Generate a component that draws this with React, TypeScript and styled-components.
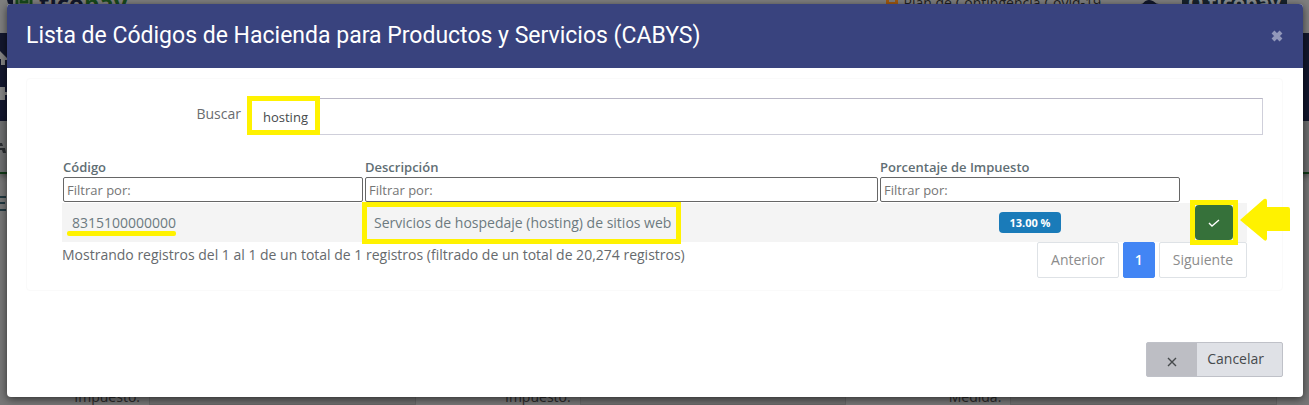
import React from 'react';
import styled, { createGlobalStyle, css } from 'styled-components';

const GlobalStyle = createGlobalStyle`
  *, *::before, *::after { box-sizing: border-box; }
  body {
    margin: 0;
    overflow: hidden;
    background: #787878;
    color: #5b5e60;
    font: 400 14px/20px "Open Sans", "Noto Sans", sans-serif;
  }
  button, input { font: inherit; }
`;

const Page = styled.div`
  position: relative;
  min-height: 100vh;
  display: grid;
`;

/* Dimmed application behind the dialog */
const Backdrop = styled.div`
  grid-area: 1 / 1;
  display: flex;
  flex-direction: column;
  background: #777777;
`;

const TopBar = styled.div`
  display: flex;
  height: 33px;
  padding: 0 22px 0 3px;
  background: #7f7f7f;
  line-height: 6px;
`;

const Brand = styled.div<{ $end?: boolean }>`
  display: flex;
  gap: 4px;
  align-items: flex-start;
  height: 8px;
  padding: 0 4px;
  color: #12172b;
  font-size: 24px;
  font-weight: 700;
  ${(p) => p.$end && css`
    justify-content: center;
    width: 105px;
    margin-left: 16px;
    background: #17222c;
    color: #8a8f92;
    font-size: 20px;
  `}
  em { font-style: normal; color: #174a1c; }
`;

const Notice = styled.div`
  display: flex;
  gap: 5px;
  margin-left: auto;
  color: #222222;
`;

const Square = styled.svg`
  display: block;
  height: 6px;
`;

const NavBar = styled.div`
  display: flex;
  flex-direction: column;
  gap: 20px;
  height: 88px;
  padding-top: 17px;
  background: #13172e;
`;

const SubBar = styled.div`
  height: 53px;
  padding-top: 18px;
  background: #6e6f70;
  border-bottom: 2px solid #123a18;
  box-shadow: 0 2px 6px rgba(0, 0, 0, 0.4);
`;

const FormArea = styled.div`
  flex: 1;
  display: flex;
  flex-direction: column;
  justify-content: space-between;
  padding: 20px 0 0;
`;

const FormRow = styled.div`
  display: grid;
  grid-template-columns: repeat(3, 1fr);
  column-gap: 77px;
  padding: 0 32px 0 62px;
  height: 16px;
  color: #2a2a2a;
  line-height: 16px;
`;

const FormCell = styled.div`
  display: grid;
  grid-template-columns: 78px 1fr;
  column-gap: 9px;
  span { text-align: right; }
`;

const FakeField = styled.div`
  background: #6f6f6f;
  border: 1px solid #666666;
`;

/* Dialog */
const Dialog = styled.section`
  grid-area: 1 / 1;
  z-index: 1;
  align-self: start;
  margin: 4px 6px 8px 7px;
  background: #ffffff;
  border-radius: 4px;
  box-shadow: 0 2px 9px rgba(0, 0, 0, 0.6);
`;

const DialogHeader = styled.header`
  display: flex;
  align-items: center;
  justify-content: space-between;
  height: 64px;
  padding: 0 20px 0 19px;
  background: #39437e;
  border-radius: 4px 4px 0 0;
`;

const Title = styled.h1`
  margin: 0;
  color: #ffffff;
  font-family: Roboto, "Open Sans", sans-serif;
  font-size: 23px;
  font-weight: 400;
  line-height: 32px;
`;

const CloseButton = styled.button`
  display: flex;
  padding: 0;
  border: 0;
  background: none;
  color: #9298ba;
`;

const DialogBody = styled.div`
  padding: 10px 20px 0 19px;
`;

const Panel = styled.div`
  padding: 19px 0 12px;
  border: 1px solid #fafafa;
  border-radius: 4px;
`;

const SearchRow = styled.div`
  display: grid;
  grid-template-columns: 195px 1fr;
  column-gap: 8px;
  padding: 0 19px;
  margin-bottom: 21px;
`;

const SearchLabel = styled.label`
  padding-top: 6px;
  color: #6a6c6f;
  text-align: right;
`;

const Marked = styled.div`
  position: relative;
`;

const SearchInput = styled.input`
  display: block;
  width: 100%;
  height: 37px;
  padding: 0 13px;
  border: 1px solid #cfcfda;
  border-top-color: #b9b7c6;
  border-radius: 0;
  background: #ffffff;
  color: #464a4c;
  font-size: 13px;
`;

const Highlight = styled.span<{ $kind: 'search' | 'text' | 'button' }>`
  position: absolute;
  border: 5px solid #fff200;
  pointer-events: none;
  ${(p) => p.$kind === 'search' && css`top: -2px; left: -2px; width: 73px; height: 39px;`}
  ${(p) => p.$kind === 'text' && css`inset: -11px -10px -11px -12px;`}
  ${(p) => p.$kind === 'button' && css`inset: -5px;`}
`;

const Results = styled.div`
  padding: 0 35px;
`;

const Table = styled.table`
  width: 100%;
  table-layout: fixed;
  border-collapse: collapse;
`;

const Col = styled.col<{ $w?: number }>`
  width: ${(p) => (p.$w ? `${p.$w}px` : 'auto')};
`;

const HeadCell = styled.th`
  padding: 1px;
  color: #5f6e74;
  font-size: 13px;
  font-weight: 600;
  line-height: 20px;
  text-align: left;
`;

const FilterInput = styled.input`
  display: block;
  width: 100%;
  height: 25px;
  padding: 0 3px;
  border: 1px solid #666666;
  border-radius: 2px;
  background: #ffffff;
  font-size: 13px;
  font-weight: 400;
  &::placeholder { color: #757575; opacity: 1; }
`;

const Row = styled.tr`
  height: 39px;
  background: #f4f4f4;
`;

const Cell = styled.td<{ $center?: boolean }>`
  padding: 0 ${(p) => (p.$center ? 0 : 10)}px;
  color: #6c7a80;
  text-align: ${(p) => (p.$center ? 'center' : 'left')};
  vertical-align: middle;
`;

const MarkedText = styled.span`
  position: relative;
  display: inline-block;
`;

const Underline = styled.span`
  position: absolute;
  left: -5px;
  right: 0;
  bottom: -3px;
  height: 5px;
  border-radius: 2px;
  background: #fff200;
`;

const Badge = styled.span`
  display: inline-block;
  padding: 0 10px;
  border-radius: 4px;
  background: #1a7bb9;
  color: #ffffff;
  font-size: 11px;
  font-weight: 700;
  line-height: 21px;
  vertical-align: middle;
`;

const SelectWrap = styled.div`
  position: relative;
  width: 38px;
  margin: 0 auto;
`;

const SelectButton = styled.button`
  display: flex;
  align-items: center;
  justify-content: center;
  width: 100%;
  height: 35px;
  padding: 0;
  border: 0;
  border-radius: 4px;
  background: #36713a;
  color: #ffffff;
`;

const Arrow = styled.svg`
  position: absolute;
  top: -7px;
  left: 45px;
`;

const TableFooter = styled.div`
  display: flex;
  justify-content: space-between;
  align-items: flex-start;
`;

const Info = styled.p`
  margin: 0;
  padding-top: 3px;
  color: #666a6d;
`;

const Pager = styled.nav`
  display: flex;
  gap: 4px;
`;

const PageButton = styled.button<{ $active?: boolean }>`
  height: 36px;
  padding: 0 13px;
  border: 1px solid #dee2e6;
  border-radius: 2px;
  background: #ffffff;
  color: #8c8c8c;
  ${(p) => p.$active && css`
    padding: 0 11px;
    border-color: #4285f4;
    background: #4285f4;
    color: #ffffff;
    font-weight: 600;
  `}
`;

const DialogFooter = styled.footer`
  display: flex;
  justify-content: flex-end;
  padding: 51px 20px 20px;
`;

const CancelButton = styled.button`
  display: flex;
  align-items: stretch;
  height: 35px;
  padding: 0;
  border: 1px solid #bfc1c8;
  border-radius: 2px;
  background: #dfe1e6;
  color: #464a4c;
`;

const CancelIcon = styled.span`
  display: flex;
  align-items: center;
  justify-content: center;
  width: 50px;
  padding-top: 4px;
  background: #bdbec4;
`;

const CancelText = styled.span`
  padding: 0 18px 0 10px;
  line-height: 32px;
`;

const COLUMNS = [
  { label: 'Código', width: 302 },
  { label: 'Descripción' },
  { label: 'Porcentaje de Impuesto', width: 302 },
];

export default function App() {
  return (
    <Page>
      <GlobalStyle />
      <Backdrop aria-hidden="true">
        <TopBar>
          <Brand>
            <Square width="28" viewBox="0 0 28 6">
              <path d="M0 0h6v6q-5 0-6-6z" fill="#12172b" />
              <path d="M10 0v6M24 0v6M14 0v2h6V0" fill="none" stroke="#174a1c" strokeWidth="3" />
            </Square>
            <span>tico<em>pay</em></span>
          </Brand>
          <Notice>
            <Square width="12" viewBox="0 0 12 6">
              <path d="M0 0h12v6H0z" fill="#a25a10" />
              <path d="M3 1h6" stroke="#7f7f7f" strokeWidth="2" />
            </Square>
            <span>Plan de Contingencia Covid-19</span>
            <Square width="60" viewBox="0 0 60 6">
              <path d="M35 4c3 0 3-4 8-4s6 4 10 4z" fill="#12172b" />
            </Square>
          </Notice>
          <Brand $end>
            <span>O</span>
            <span>ticopay</span>
          </Brand>
        </TopBar>
        <NavBar>
          <svg width="7" height="16" viewBox="0 0 7 16">
            <path d="M0 1l7 7v2H5v5H1V9H0z" fill="#858585" />
          </svg>
          <svg width="7" height="16" viewBox="0 0 7 16">
            <path d="M0 1h5v5h2v3H5v5H0z" fill="#858585" />
          </svg>
        </NavBar>
        <SubBar>
          <svg width="7" height="14" viewBox="0 0 7 14">
            <path d="M0 3h2l1 3H0zM0 8h5l1 5H3l-1-3H0z" fill="#2a2d31" />
          </svg>
        </SubBar>
        <FormArea>
          <svg width="7" height="18" viewBox="0 0 7 18">
            <path d="M0 3h6M0 9h5M0 16h6" stroke="#213840" strokeWidth="2" />
          </svg>
          <FormRow>
            {['Impuesto:', 'Impuesto:', 'Medida:'].map((label, i) => (
              <FormCell key={i}>
                <span>{label}</span>
                <FakeField />
              </FormCell>
            ))}
          </FormRow>
        </FormArea>
      </Backdrop>

      <Dialog role="dialog" aria-labelledby="dialog-title">
        <DialogHeader>
          <Title id="dialog-title">Lista de Códigos de Hacienda para Productos y Servicios (CABYS)</Title>
          <CloseButton type="button" aria-label="Cerrar">
            <svg width="12" height="12" viewBox="0 0 12 12">
              <path d="M2 2l8 8M10 2l-8 8" stroke="currentColor" strokeWidth="4" />
            </svg>
          </CloseButton>
        </DialogHeader>

        <DialogBody>
          <Panel>
            <SearchRow>
              <SearchLabel htmlFor="search">Buscar</SearchLabel>
              <Marked>
                <SearchInput id="search" type="text" defaultValue="hosting" />
                <Highlight $kind="search" />
              </Marked>
            </SearchRow>

            <Results>
              <Table>
                <colgroup>
                  {COLUMNS.map((c) => <Col key={c.label} $w={c.width} />)}
                  <Col $w={66} />
                </colgroup>
                <thead>
                  <tr>
                    {COLUMNS.map((c) => (
                      <HeadCell key={c.label} scope="col">
                        {c.label}
                        <FilterInput type="text" placeholder="Filtrar por:" aria-label={c.label} />
                      </HeadCell>
                    ))}
                    <HeadCell as="td" />
                  </tr>
                </thead>
                <tbody>
                  <Row>
                    <Cell>
                      <MarkedText>8315100000000<Underline /></MarkedText>
                    </Cell>
                    <Cell>
                      <MarkedText>
                        Servicios de hospedaje (hosting) de sitios web
                        <Highlight $kind="text" />
                      </MarkedText>
                    </Cell>
                    <Cell $center><Badge>13.00 %</Badge></Cell>
                    <Cell $center>
                      <SelectWrap>
                        <SelectButton type="button" aria-label="Seleccionar">
                          <svg width="12" height="8" viewBox="0 0 12 8">
                            <path d="M1 4l3 3 7-6" fill="none" stroke="currentColor" strokeWidth="1.4" />
                          </svg>
                        </SelectButton>
                        <Highlight $kind="button" />
                        <Arrow width="50" height="43" viewBox="0 0 50 43">
                          <path d="M0 22L24 1q3-1 3 2v6h21q2 0 2 2v22h-23v8q-1 3-3 1z" fill="#fff200" />
                        </Arrow>
                      </SelectWrap>
                    </Cell>
                  </Row>
                </tbody>
              </Table>

              <TableFooter>
                <Info>Mostrando registros del 1 al 1 de un total de 1 registros (filtrado de un total de 20,274 registros)</Info>
                <Pager aria-label="Paginación">
                  <PageButton type="button">Anterior</PageButton>
                  <PageButton type="button" $active>1</PageButton>
                  <PageButton type="button">Siguiente</PageButton>
                </Pager>
              </TableFooter>
            </Results>
          </Panel>
        </DialogBody>

        <DialogFooter>
          <CancelButton type="button">
            <CancelIcon>
              <svg width="10" height="10" viewBox="0 0 10 10">
                <path d="M1 1l8 8M9 1l-8 8" stroke="currentColor" strokeWidth="1.4" />
              </svg>
            </CancelIcon>
            <CancelText>Cancelar</CancelText>
          </CancelButton>
        </DialogFooter>
      </Dialog>
    </Page>
  );
}
